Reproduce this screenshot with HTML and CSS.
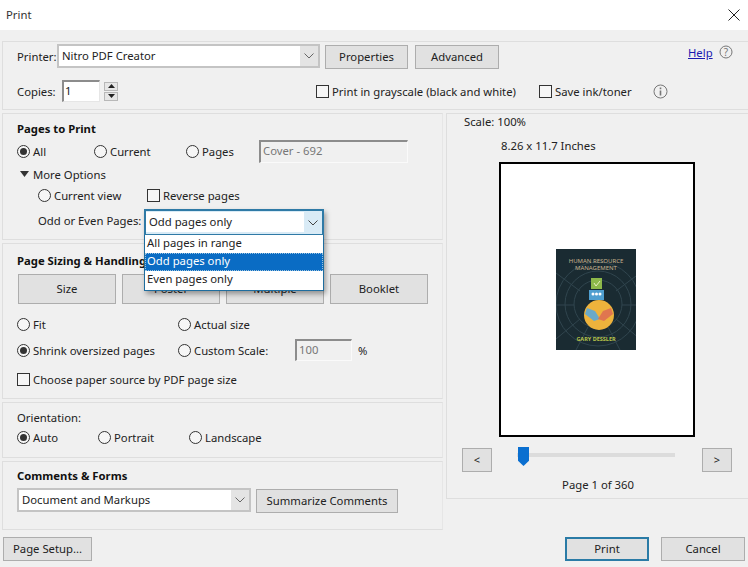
FILE: index.html
```html
<!DOCTYPE html>
<html lang="en">
<head>
<meta charset="utf-8">
<title>Print</title>
<link rel="stylesheet" href="styles.css">
</head>
<body>
<div class="dialog">
  <header class="titlebar">
    <span>Print</span>
    <svg class="close" width="12" height="12" viewBox="0 0 12 12"><path d="M.5.5l11 11M11.5.5l-11 11" stroke="#222" fill="none"/></svg>
  </header>
  <main class="content">
    <section class="panel top">
      <div class="row printer-row">
        <span class="w40">Printer:</span>
        <div class="select printer-select"><span class="select-value">Nitro PDF Creator</span><span class="select-arrow"><svg width="10" height="6" viewBox="0 0 10 6"><path d="M.5.5L5 5 9.5.5" fill="none" stroke="#666"/></svg></span></div>
        <button class="btn props">Properties</button>
        <button class="btn props adv">Advanced</button>
        <a class="help">Help</a>
        <svg class="qicon" width="14" height="14" viewBox="0 0 14 14"><circle cx="7" cy="7" r="6" fill="none" stroke="#777"/><text x="7" y="10.5" text-anchor="middle" class="icon-text">?</text></svg>
      </div>
      <div class="row copies-row">
        <span class="w45">Copies:</span>
        <div class="input copies-input">1</div>
        <div class="spinner">
          <span class="spin"><svg width="7" height="4" viewBox="0 0 7 4"><path d="M3.5 0L7 4H0z" fill="#222"/></svg></span>
          <span class="spin"><svg width="7" height="4" viewBox="0 0 7 4"><path d="M0 0h7L3.5 4z" fill="#222"/></svg></span>
        </div>
        <label class="opt gray-opt"><i class="check"></i>Print in grayscale (black and white)</label>
        <label class="opt ink-opt"><i class="check"></i>Save ink/toner</label>
        <svg class="iicon" width="15" height="15" viewBox="0 0 15 15"><circle cx="7.5" cy="7.5" r="6.5" fill="none" stroke="#777"/><path d="M7.5 3.6v1.6M7.5 6.5v5" stroke="#777" stroke-width="1.6"/></svg>
      </div>
    </section>

    <div class="columns">
      <div class="left">
        <section class="panel pages">
          <h2>Pages to Print</h2>
          <div class="row radios r1">
            <label class="opt c77"><i class="radio on"></i>All</label>
            <label class="opt c92"><i class="radio"></i>Current</label>
            <label class="opt c73"><i class="radio"></i>Pages</label>
            <div class="input disabled pages-input">Cover - 692</div>
          </div>
          <div class="row more"><svg width="9" height="6" viewBox="0 0 9 6"><path d="M0 0h9L4.500 6z" fill="#333"/></svg><span>More Options</span></div>
          <div class="row indented cv">
            <label class="opt c109"><i class="radio"></i>Current view</label>
            <label class="opt"><i class="check"></i>Reverse pages</label>
          </div>
          <div class="row indented odd">
            <span class="odd-label">Odd or Even Pages:</span>
          </div>
          <div class="combo">
            <div class="combo-head"><span class="select-value">Odd pages only</span><span class="select-arrow"><svg width="10" height="6" viewBox="0 0 10 6"><path d="M.5.5L5 5 9.500.5" fill="none" stroke="#444"/></svg></span></div>
            <ul class="combo-list">
              <li>All pages in range</li>
              <li class="sel">Odd pages only</li>
              <li>Even pages only</li>
            </ul>
          </div>
        </section>

        <section class="panel sizing">
          <h2>Page Sizing &amp; Handling</h2>
          <div class="tabs">
            <button class="btn tab">Size</button>
            <button class="btn tab">Poster</button>
            <button class="btn tab">Multiple</button>
            <button class="btn tab">Booklet</button>
          </div>
          <div class="row s1">
            <label class="opt c161"><i class="radio"></i>Fit</label>
            <label class="opt"><i class="radio"></i>Actual size</label>
          </div>
          <div class="row s2">
            <label class="opt c161"><i class="radio on"></i>Shrink oversized pages</label>
            <label class="opt c117"><i class="radio"></i>Custom Scale:</label>
            <div class="input disabled scale-input">100</div>
            <span class="pct">%</span>
          </div>
          <div class="row s3">
            <label class="opt"><i class="check"></i>Choose paper source by PDF page size</label>
          </div>
        </section>

        <section class="panel orient">
          <div class="orient-label">Orientation:</div>
          <div class="row o1">
            <label class="opt c81"><i class="radio on"></i>Auto</label>
            <label class="opt c91"><i class="radio"></i>Portrait</label>
            <label class="opt"><i class="radio"></i>Landscape</label>
          </div>
        </section>

        <section class="panel comments">
          <h2>Comments &amp; Forms</h2>
          <div class="row cm">
            <div class="select comments-select"><span class="select-value">Document and Markups</span><span class="select-arrow"><svg width="10" height="6" viewBox="0 0 10 6"><path d="M.5.5L5 5 9.5.5" fill="none" stroke="#666"/></svg></span></div>
            <button class="btn summarize">Summarize Comments</button>
          </div>
        </section>
      </div>

      <aside class="panel preview">
        <div class="scale">Scale: 100%</div>
        <div class="dims">8.26 x 11.7 Inches</div>
        <div class="sheet">
          <svg class="cover" width="80" height="101" viewBox="0 0 80 101">
            <rect width="80" height="101" fill="#1a2b32"/>
            <g stroke="#30454e" stroke-width="1" fill="none">
              <circle cx="42" cy="55" r="24"/><circle cx="42" cy="55" r="33"/><circle cx="42" cy="55" r="42"/>
              <path d="M0 24L24 42M84 24L60 42M0 90L24 70M84 90L60 70M0 56H18M66 56H80M20 101L32 78M64 101L52 78"/>
            </g>
            <text x="40" y="14" class="cv-title">HUMAN RESOURCE</text>
            <text x="40" y="20.5" class="cv-title">MANAGEMENT</text>
            <rect x="35" y="29" width="11" height="11" fill="#8db84a"/>
            <path d="M38 34l2 3 4-5" stroke="#e8f0c0" fill="none"/>
            <rect x="33" y="41" width="15" height="10" fill="#4f9fd0"/>
            <circle cx="37" cy="45" r="1.500" fill="#fff"/><circle cx="40.500" cy="45" r="1.500" fill="#fff"/><circle cx="44" cy="45" r="1.500" fill="#fff"/>
            <circle cx="43" cy="66" r="15" fill="#eeb33c"/>
            <path d="M31 59l8 3 5 8-6 2-9-7z" fill="#6aa9c8"/><path d="M55 59l-8 3-5 8 6 2 9-7z" fill="#e0764f"/>
            <text x="40" y="92" class="cv-author">GARY DESSLER</text>
          </svg>
        </div>
        <div class="nav">
          <button class="btn arrow">&lt;</button>
          <div class="slider"><span class="thumb"></span></div>
          <button class="btn arrow">&gt;</button>
        </div>
        <div class="pageno">Page 1 of 360</div>
      </aside>
    </div>

    <footer class="footer">
      <button class="btn setup">Page Setup...</button>
      <div class="actions">
        <button class="btn act primary">Print</button>
        <button class="btn act">Cancel</button>
      </div>
    </footer>
  </main>
</div>
</body>
</html>
```
FILE: styles.css
```css
* { box-sizing: border-box; }
html, body { margin: 0; padding: 0; }
body {
  width: 748px; height: 567px; overflow: hidden;
  font-family: "Noto Sans", "Open Sans", sans-serif;
  font-size: 11.3px; color: #222; background: #f0f0f0;
}
button { font: inherit; color: inherit; }
h2 { margin: 0; font-size: 11.3px; font-weight: 700; line-height: 16px; color: #111; }
.dialog { display: flex; flex-direction: column; height: 567px; }
.titlebar {
  height: 30px; background: #fff; display: flex; justify-content: space-between;
  align-items: center; padding: 0 7px 1px 6px; color: #333;
}
.close { margin-right: 1px; }
.content { flex: 1; padding: 11px 0 0 2px; }
.panel { border: 1px solid #dedede; border-right-color: #e6e6e6; background: #f0f0f0; }
.row { display: flex; align-items: center; }
.top { height: 69px; padding: 2px 0 0 14px; border-right: 0; }
.printer-row { height: 24px; }
.w40 { width: 40px; }
.w45 { width: 45px; }
.select {
  display: flex; height: 24px; border: 2px solid #c4c4c4; background: #e4e4e4;
}
.select-value { flex: 1; background: #fff; line-height: 20px; padding-left: 3px; }
.select-arrow { width: 18px; display: flex; align-items: center; justify-content: center; }
.printer-select { width: 263px; }
.btn {
  height: 24px; border: 1px solid #adadad; background: #e1e1e1; padding: 0;
  display: block; text-align: center; line-height: 20px;
}
.props { width: 83px; margin: 2px 0 0 5px; }
.adv { width: 84px; margin-left: 7px; }
.help { margin: -7px 0 0 189px; color: #1a1ab0; text-decoration: underline; }
.qicon { margin: -8px 0 0 6px; }
.icon-text { font-size: 10px; fill: #777; }
.copies-row { height: 22px; margin-top: 12px; }
.input { border: 1px solid #e6e6e6; border-top: 2px solid #8c8c8c; border-left: 2px solid #8c8c8c; background: #fff; line-height: 17px; padding-left: 1px; }
.copies-input { width: 38px; height: 22px; }
.spinner { display: flex; flex-direction: column; gap: 1px; margin-left: 4px; }
.spin { width: 14px; height: 9px; border: 1px solid #b8b8b8; background: #e6e6e6; display: flex; align-items: center; justify-content: center; }
.opt { display: flex; align-items: center; white-space: nowrap; }
.check { width: 13px; height: 13px; border: 1px solid #333; background: #f6f6f6; margin-right: 3px; flex: none; }
.radio { width: 13px; height: 13px; border: 1px solid #333; border-radius: 50%; background: #f6f6f6; margin-right: 3px; flex: none; position: relative; }
.radio.on::after { content: ""; position: absolute; inset: 2px; background: #333; border-radius: 50%; }
.gray-opt { margin-left: 198px; width: 223px; }
.ink-opt { width: 114px; }
.iicon { flex: none; }
.columns { display: flex; gap: 3px; margin-top: 3px; }
.left { width: 441px; flex: none; display: flex; flex-direction: column; gap: 3px; }
.pages { height: 127px; padding: 7px 0 0 14px; position: relative; }
.c77 { width: 77px; } .c92 { width: 92px; } .c73 { width: 73px; }
.r1 { height: 24px; margin-top: 2px; }
.disabled { color: #777; background: #f0f0f0; border-bottom-color: #fafafa; border-right-color: #fafafa; padding-left: 2px; line-height: 18px; }
.pages-input { width: 149px; height: 23px; }
.more { height: 20px; margin-top: 1px; padding-left: 3px; gap: 4px; }
.indented { padding-left: 21px; }
.cv { height: 20px; margin-top: 1px; }
.c109 { width: 109px; }
.odd { height: 20px; margin-top: 6px; }
.odd-label { line-height: 20px; }
.combo { position: absolute; left: 141px; top: 95px; width: 180px; z-index: 5; box-shadow: 2px 3px 5px rgba(0,0,0,.35); }
.combo-head { display: flex; height: 26px; border: 2px solid #2f7aa6; border-bottom-width: 1px; background: #d9ebf6; }
.combo-head .select-value { line-height: 19px; margin: 1px 0 2px; padding-left: 3px; }
.combo-list { list-style: none; margin: 0; padding: 0; background: #fff; border: 1px solid #1f6d9e; border-top: 0; }
.combo-list li { height: 18px; line-height: 16px; padding-left: 2px; color: #222; }
.combo-list li:last-child { height: 19px; }
.combo-list .sel { background: #0a6cc4; color: #fff; outline: 1px dotted #9cc3de; outline-offset: -1px; }
.sizing { height: 156px; padding: 9px 0 0 15px; }
.sizing h2 { margin-left: -1px; }
.tabs { display: grid; grid-template-columns: repeat(4, 98px); gap: 6px; margin-top: 5px; }
.tab { height: 30px; line-height: 26px; }
.s1 { height: 20px; margin-top: 10px; margin-left: -1px; }
.c161 { width: 161px; }
.s2 { height: 22px; margin-top: 5px; margin-left: -1px; }
.c117 { width: 117px; }
.scale-input { width: 57px; height: 22px; }
.pct { margin-left: 6px; }
.s3 { height: 20px; margin-top: 8px; margin-left: -1px; }
.orient { height: 56px; padding: 7px 0 0 14px; }
.orient-label { line-height: 16px; }
.o1 { height: 20px; margin-top: 1px; }
.c81 { width: 81px; } .c91 { width: 91px; }
.comments { height: 69px; padding: 6px 0 0 14px; }
.cm { margin-top: 3px; }
.comments-select { width: 234px; height: 24px; }
.summarize { width: 142px; margin: 2px 0 0 5px; }
.preview { width: 302px; flex: none; height: 386px; border-right: 0; display: flex; flex-direction: column; }
.scale { margin: 0 0 0 17px; line-height: 15px; }
.dims { margin: 9px 0 0 54px; line-height: 15px; }
.sheet {
  width: 196px; height: 275px; margin: 9px 0 0 52px; border: 2px solid #000; background: #fff;
  display: flex; align-items: center; justify-content: center; flex: none;
}
.cover { display: block; margin: 0 2px 1px 0; }
.cv-title { font-size: 6px; fill: #c9b48f; text-anchor: middle; }
.cv-author { font-size: 5.5px; font-weight: 700; fill: #b7c24a; text-anchor: middle; }
.nav { display: flex; align-items: center; margin: 11px 0 0 15px; }
.arrow { width: 30px; height: 24px; line-height: 20px; font-size: 11px; }
.slider { width: 158px; height: 4px; margin: 0 27px 0 25px; background: #dcdcdc; position: relative; top: -5px; }
.thumb { position: absolute; left: 1px; top: -6px; width: 11px; height: 19px; background: #0a6fd0; clip-path: polygon(0 0, 100% 0, 100% 72%, 50% 100%, 0 72%); }
.pageno { text-align: center; margin: 5px 0 0 1px; line-height: 16px; }
.footer { display: flex; justify-content: space-between; margin: 7px 3px 0 1px; }
.setup { width: 89px; }
.actions { display: flex; gap: 12px; }
.act { width: 84px; }
.primary { border: 2px solid #2a7ba6; line-height: 18px; }
```
